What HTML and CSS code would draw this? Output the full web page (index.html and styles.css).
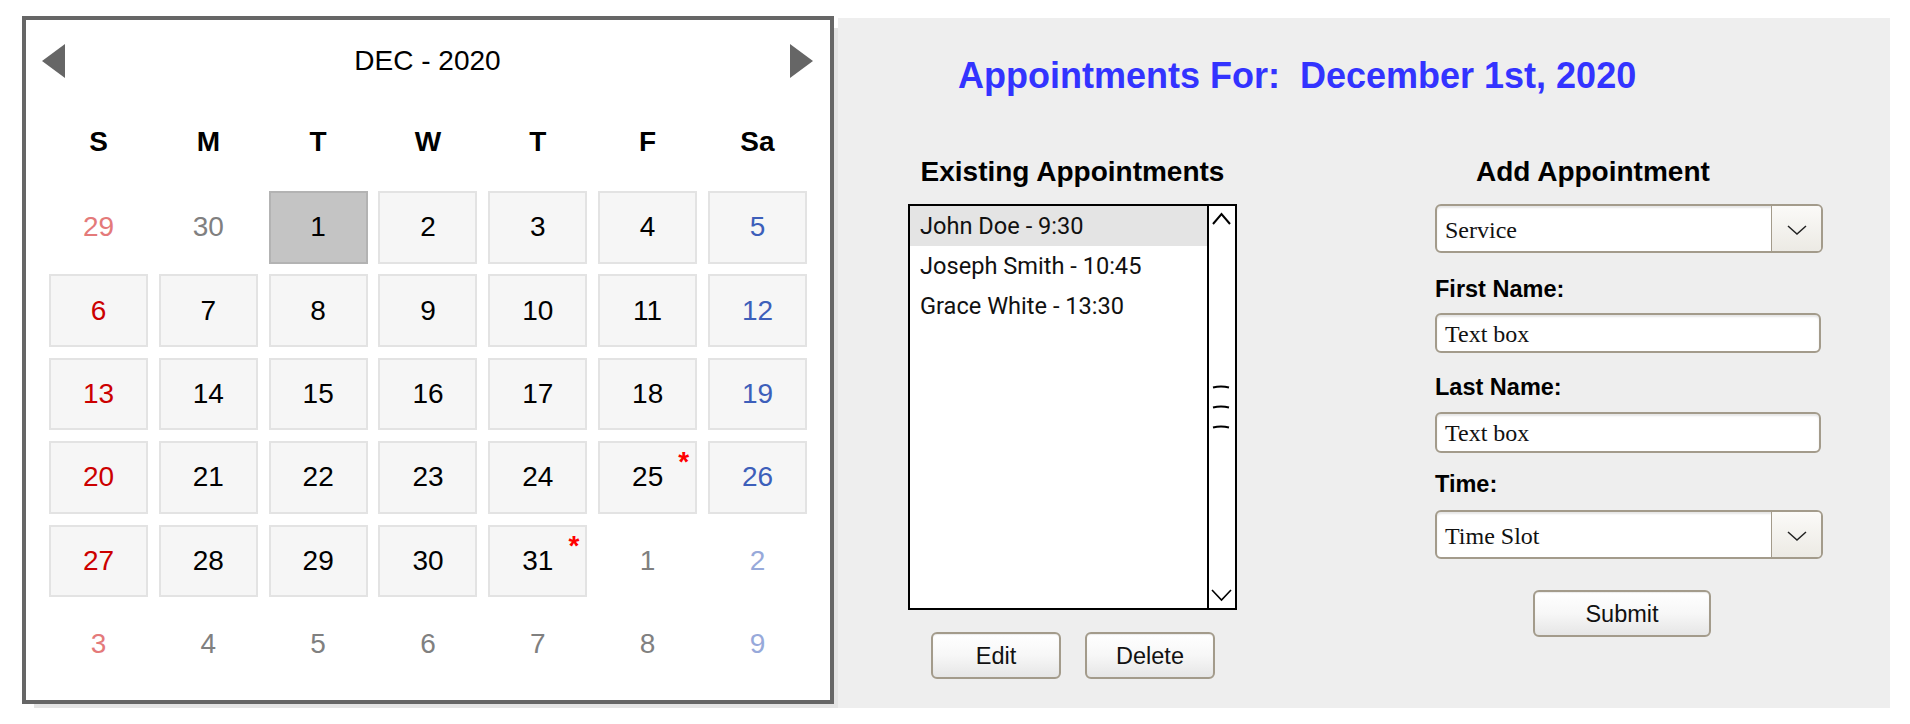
FILE: index.html
```html
<!DOCTYPE html>
<html lang="en">
<head>
<meta charset="utf-8">
<title>Appointments</title>
<link rel="stylesheet" href="styles.css">
</head>
<body>
<div class="page">
  <section class="calendar">
    <div class="cal-head">
      <svg class="arrow" width="23" height="34" viewBox="0 0 23 34"><polygon points="0,17 23,0 23,34" fill="#666"/></svg>
      <div class="cal-title">DEC - 2020</div>
      <svg class="arrow" width="23" height="34" viewBox="0 0 23 34"><polygon points="23,17 0,0 0,34" fill="#666"/></svg>
    </div>
    <div class="weekdays">
      <div>S</div><div>M</div><div>T</div><div>W</div><div>T</div><div>F</div><div>Sa</div>
    </div>
    <div class="days">
      <div class="day sun other">29</div>
      <div class="day other">30</div>
      <div class="day box selected">1</div>
      <div class="day box">2</div>
      <div class="day box">3</div>
      <div class="day box">4</div>
      <div class="day box sat">5</div>

      <div class="day box sun">6</div>
      <div class="day box">7</div>
      <div class="day box">8</div>
      <div class="day box">9</div>
      <div class="day box">10</div>
      <div class="day box">11</div>
      <div class="day box sat">12</div>

      <div class="day box sun">13</div>
      <div class="day box">14</div>
      <div class="day box">15</div>
      <div class="day box">16</div>
      <div class="day box">17</div>
      <div class="day box">18</div>
      <div class="day box sat">19</div>

      <div class="day box sun">20</div>
      <div class="day box">21</div>
      <div class="day box">22</div>
      <div class="day box">23</div>
      <div class="day box">24</div>
      <div class="day box">25<span class="mark">*</span></div>
      <div class="day box sat">26</div>

      <div class="day box sun">27</div>
      <div class="day box">28</div>
      <div class="day box">29</div>
      <div class="day box">30</div>
      <div class="day box">31<span class="mark">*</span></div>
      <div class="day other">1</div>
      <div class="day sat other">2</div>

      <div class="day sun other">3</div>
      <div class="day other">4</div>
      <div class="day other">5</div>
      <div class="day other">6</div>
      <div class="day other">7</div>
      <div class="day other">8</div>
      <div class="day sat other">9</div>
    </div>
  </section>

  <section class="panel">
    <h1 class="appt-title">Appointments For:&nbsp; December 1st, 2020</h1>
    <div class="panel-body">
      <div class="existing">
        <h2 class="col-title center">Existing Appointments</h2>
        <div class="listbox">
          <ul class="items">
            <li class="item active">John Doe - 9:30</li>
            <li class="item">Joseph Smith - 10:45</li>
            <li class="item">Grace White - 13:30</li>
          </ul>
          <div class="scroll">
            <svg width="27" height="402" viewBox="0 0 27 402">
              <polyline points="4,18 12.5,8 21,18" fill="none" stroke="#000" stroke-width="2"/>
              <path d="M4 181.5 Q12 179.5 20 181.5" fill="none" stroke="#000" stroke-width="2"/>
              <path d="M4 201.5 Q12 199.5 20 201.5" fill="none" stroke="#000" stroke-width="2"/>
              <path d="M4 221.5 Q12 219.5 20 221.5" fill="none" stroke="#000" stroke-width="2"/>
              <polyline points="3,384 12.5,394 22,384" fill="none" stroke="#000" stroke-width="1.6"/>
            </svg>
          </div>
        </div>
        <div class="btn-row">
          <button class="btn small">Edit</button>
          <button class="btn small">Delete</button>
        </div>
      </div>

      <div class="add">
        <h2 class="col-title add-title">Add Appointment</h2>
        <div class="select first">
          <span class="select-text">Service</span>
          <span class="select-btn"><svg width="20" height="10" viewBox="0 0 20 10"><polyline points="1,1 10,9 19,1" fill="none" stroke="#222" stroke-width="1.5"/></svg></span>
        </div>
        <div class="label l1">First Name:</div>
        <div class="textbox t1">Text box</div>
        <div class="label l2">Last Name:</div>
        <div class="textbox t2">Text box</div>
        <div class="label l3">Time:</div>
        <div class="select s2">
          <span class="select-text">Time Slot</span>
          <span class="select-btn"><svg width="20" height="10" viewBox="0 0 20 10"><polyline points="1,1 10,9 19,1" fill="none" stroke="#222" stroke-width="1.5"/></svg></span>
        </div>
        <button class="btn submit">Submit</button>
      </div>
    </div>
  </section>
</div>
</body>
</html>
```

FILE: styles.css
```css
* { box-sizing: border-box; }

body {
  margin: 0;
  background: #fff;
  font-family: "Liberation Sans", Arial, sans-serif;
  color: #000;
}

.page {
  display: flex;
  align-items: flex-start;
  padding: 16px 0 0 22px;
}

/* Calendar */
.calendar {
  flex-shrink: 0;
  width: 812px;
  height: 688px;
  border: 4px solid #666;
  background: #fff;
  box-shadow: 11px 11px 0 -1px #e4e4e4;
}

.cal-head {
  margin-top: 24px;
  height: 34px;
  display: flex;
  align-items: center;
  justify-content: space-between;
  padding: 0 17px 0 16px;
}

.arrow { display: block; }

.cal-title {
  font-size: 28px;
  line-height: 34px;
}

.weekdays,
.days {
  display: grid;
  grid-template-columns: repeat(7, 99px);
  column-gap: 10.83px;
  padding: 0 23px;
}

.weekdays {
  margin-top: 48px;
  font-size: 28px;
  font-weight: bold;
  line-height: 32px;
  text-align: center;
}

.days {
  margin-top: 33px;
  grid-auto-rows: 72.6px;
  row-gap: 10.8px;
}

.day {
  position: relative;
  display: flex;
  align-items: center;
  justify-content: center;
  font-size: 28px;
  color: #000;
}

.day.box {
  background: #f6f6f6;
  border: 2px solid #e3e3e3;
}

.day.selected {
  background: #c4c4c4;
  border-color: #b3b3b3;
}

.day.sun { color: #cc0000; }
.day.sat { color: #3d5fba; }
.day.other { color: #808080; }
.day.sun.other { color: #e47a7a; }
.day.sat.other { color: #97a9da; }

.mark {
  position: absolute;
  top: 5px;
  right: 6px;
  font-size: 28px;
  font-weight: bold;
  line-height: 28px;
  color: #ff0000;
}

/* Right panel */
.panel {
  flex-shrink: 0;
  width: 1052px;
  height: 690px;
  margin: 2px 0 0 4px;
  background: #eeeeee;
  display: flex;
  flex-direction: column;
}

.appt-title {
  margin: 37px 0 0 120px;
  font-size: 36px;
  line-height: 42px;
  font-weight: bold;
  color: #3333ff;
}

.panel-body {
  display: flex;
  align-items: flex-start;
  margin-top: 59px;
  padding-left: 70px;
}

.col-title {
  margin: 0;
  font-size: 28px;
  line-height: 32px;
  font-weight: bold;
}

.col-title.center { text-align: center; }

.existing { width: 329px; }

.listbox {
  margin-top: 16px;
  height: 406px;
  border: 2px solid #000;
  border-right-width: 2.5px;
  background: #fff;
  display: flex;
}

.items {
  flex: 1;
  margin: 0;
  padding: 0;
  list-style: none;
  font-family: Roboto, "Liberation Sans", sans-serif;
  font-size: 23.6px;
  color: #111;
}

.item {
  height: 40px;
  line-height: 40px;
  padding-left: 10px;
}

.item.active { background: #e4e4e4; }

.scroll {
  width: 28.5px;
  border-left: 2px solid #000;
}

.scroll svg { display: block; }

.btn-row {
  margin-top: 22px;
  display: flex;
  justify-content: center;
  gap: 24px;
  padding-left: 1px;
}

.btn {
  height: 47px;
  border: 2px solid #a39b8b;
  border-radius: 6px;
  background: linear-gradient(#ffffff 0%, #f7f7f7 50%, #e6e6e6 100%);
  box-shadow: inset 0 1px 1px rgba(0, 0, 0, 0.08);
  font-family: "Liberation Sans", Arial, sans-serif;
  font-size: 23.5px;
  color: #111;
  padding: 2px 0 0;
}

.btn.small { width: 130px; }

.add {
  margin-left: 198px;
  width: 388px;
  display: flex;
  flex-direction: column;
  align-items: flex-start;
}

.add-title { padding-left: 41px; }

.select {
  width: 388px;
  height: 49px;
  border: 2px solid #a39b8b;
  border-radius: 6px;
  background: #fff;
  box-shadow: inset 0 2px 2px rgba(0, 0, 0, 0.1);
  display: flex;
  overflow: hidden;
}

.select.first { margin-top: 16px; }
.select.s2 { margin-top: 12px; }

.select-text,
.textbox {
  font-family: "Liberation Serif", "Times New Roman", serif;
  font-size: 24px;
  color: #111;
}

.select-text {
  flex: 1;
  display: flex;
  align-items: center;
  padding: 3px 0 0 8px;
}

.select-btn {
  width: 50px;
  border-left: 1.5px solid #a39b8b;
  background: linear-gradient(#fbfaf8, #eceae4);
  display: flex;
  align-items: center;
  justify-content: center;
  padding-top: 2px;
}

.select-btn svg { display: block; }

.label {
  font-size: 23.5px;
  line-height: 27px;
  font-weight: bold;
}

.label.l1 { margin-top: 23px; }
.label.l2 { margin-top: 21px; }
.label.l3 { margin-top: 18px; }

.textbox {
  width: 386px;
  height: 40px;
  border: 2px solid #a39b8b;
  border-radius: 6px;
  background: #fff;
  box-shadow: inset 0 2px 2px rgba(0, 0, 0, 0.1);
  display: flex;
  align-items: center;
  padding: 2px 0 0 8px;
}

.textbox.t1 { margin-top: 10px; }
.textbox.t2 { margin-top: 11px; height: 41px; }

.btn.submit {
  margin: 31px 0 0 98px;
  width: 178px;
}
```
